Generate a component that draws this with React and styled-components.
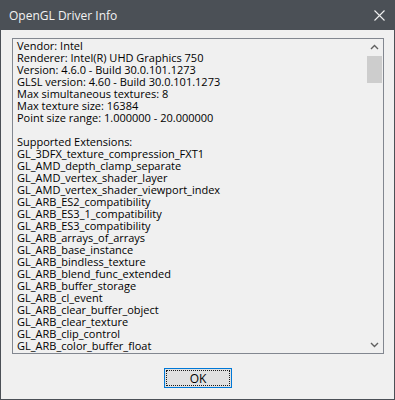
import React from 'react'
import styled, { createGlobalStyle } from 'styled-components'

const GlobalStyle = createGlobalStyle`
  html, body {
    margin: 0;
    padding: 0;
    background: #f0f0f0;
  }
  body {
    font-family: 'Open Sans', 'Liberation Sans', sans-serif;
  }
`;

const Window = styled.div`
  width: 395px;
  height: 400px;
  box-sizing: border-box;
  border: 1px solid #4b5056;
  border-top: none;
  background: #f0f0f0;
  display: flex;
  flex-direction: column;
`;

const TitleBar = styled.div`
  height: 30px;
  flex: none;
  background: #4b5056;
  display: flex;
  align-items: center;
  justify-content: space-between;
  padding: 0 9px 0 8px;
  color: #f2f2f2;
  font-size: 12px;
`;

const Close = styled.svg`
  width: 11px;
  height: 11px;
`;

const Body = styled.div`
  flex: 1;
  display: flex;
  flex-direction: column;
  padding: 8px 10px 0 11px;
`;

const TextBox = styled.div`
  height: 316px;
  box-sizing: border-box;
  border: 1px solid #828790;
  display: flex;
  background: #f0f0f0;
`;

const Content = styled.div`
  flex: 1;
  overflow: hidden;
  padding: 1px 4px;
  font-size: 11px;
  line-height: 12px;
  color: #000;
  white-space: pre;
`;

const Line = styled.div`
  height: 12px;
`;

const ScrollBar = styled.div`
  width: 17px;
  flex: none;
  display: flex;
  flex-direction: column;
  align-items: center;
`;

const Arrow = styled.svg`
  width: 17px;
  height: 17px;
  flex: none;
`;

const Track = styled.div`
  flex: 1;
  width: 100%;
  display: flex;
  flex-direction: column;
  align-items: center;
`;

const Thumb = styled.div`
  width: 15px;
  height: 27px;
  background: #cdcdcd;
`;

const Footer = styled.div`
  flex: 1;
  display: flex;
  justify-content: center;
  padding-top: 14px;
`;

const Button = styled.button`
  width: 68px;
  height: 20px;
  box-sizing: border-box;
  border: 1px solid #0078d7;
  background: #e1e1e1;
  padding: 1px;
  font-family: inherit;
  font-size: 12px;
  color: #000;
  cursor: pointer;
`;

const Focus = styled.span`
  display: flex;
  align-items: center;
  justify-content: center;
  height: 100%;
  outline: 1px dotted #1a1a1a;
  outline-offset: -1px;
`;

const lines = [
  'Vendor: Intel',
  'Renderer: Intel(R) UHD Graphics 750',
  'Version: 4.6.0 - Build 30.0.101.1273',
  'GLSL version: 4.60 - Build 30.0.101.1273',
  'Max simultaneous textures: 8',
  'Max texture size: 16384',
  'Point size range: 1.000000 - 20.000000',
  '',
  'Supported Extensions:',
  'GL_3DFX_texture_compression_FXT1',
  'GL_AMD_depth_clamp_separate',
  'GL_AMD_vertex_shader_layer',
  'GL_AMD_vertex_shader_viewport_index',
  'GL_ARB_ES2_compatibility',
  'GL_ARB_ES3_1_compatibility',
  'GL_ARB_ES3_compatibility',
  'GL_ARB_arrays_of_arrays',
  'GL_ARB_base_instance',
  'GL_ARB_bindless_texture',
  'GL_ARB_blend_func_extended',
  'GL_ARB_buffer_storage',
  'GL_ARB_cl_event',
  'GL_ARB_clear_buffer_object',
  'GL_ARB_clear_texture',
  'GL_ARB_clip_control',
  'GL_ARB_color_buffer_float',
]

const App = () => {
  return (
    <>
      <GlobalStyle />
      <Window>
        <TitleBar>
          <span>OpenGL Driver Info</span>
          <Close viewBox="0 0 11 11">
            <path d="M0.5 0.5 L10.5 10.5 M10.5 0.5 L0.5 10.5" stroke="#f0f0f0" strokeWidth="1.1" fill="none" />
          </Close>
        </TitleBar>
        <Body>
          <TextBox>
            <Content>
              {lines.map((l, i) => (
                <Line key={i}>{l}</Line>
              ))}
            </Content>
            <ScrollBar>
              <Arrow viewBox="0 0 17 17">
                <path d="M5 10 L8.5 6.5 L12 10" stroke="#606060" strokeWidth="1.4" fill="none" />
              </Arrow>
              <Track>
                <Thumb />
              </Track>
              <Arrow viewBox="0 0 17 17">
                <path d="M5 7 L8.5 10.5 L12 7" stroke="#606060" strokeWidth="1.4" fill="none" />
              </Arrow>
            </ScrollBar>
          </TextBox>
          <Footer>
            <Button>
              <Focus>OK</Focus>
            </Button>
          </Footer>
        </Body>
      </Window>
    </>
  )
}

export default App
